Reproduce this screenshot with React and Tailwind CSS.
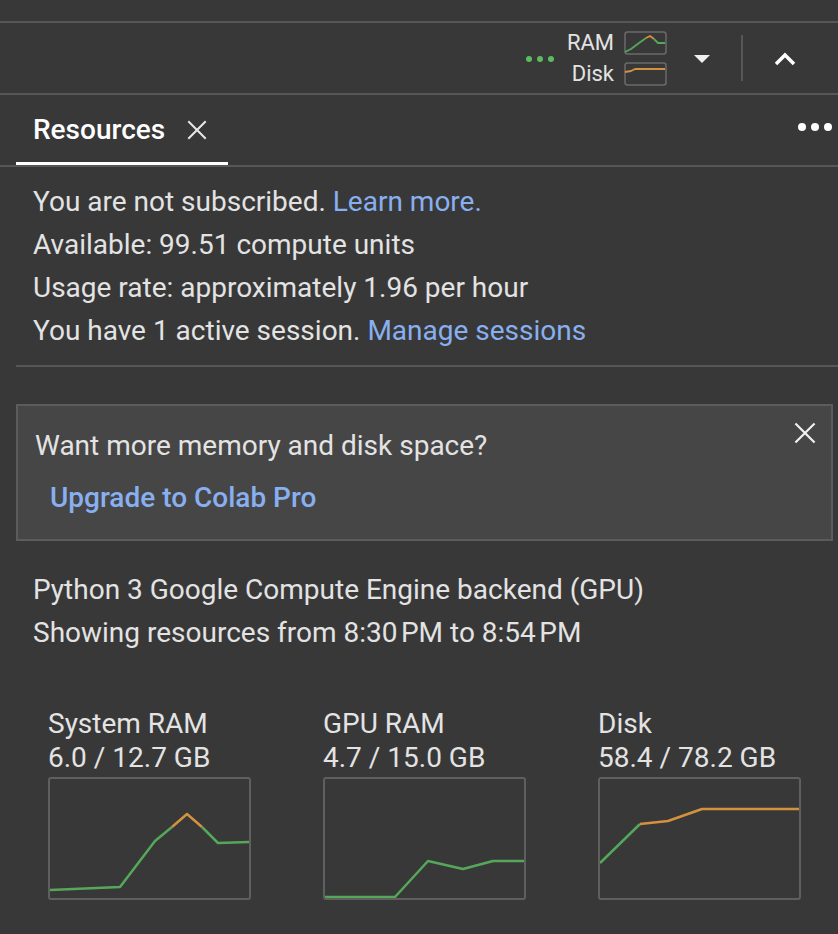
import React from "react";

const GREEN = "#55a85a";
const ORANGE = "#d4923f";

function Chart({ label, value, segments }) {
  return (
    <div className="w-[275px] shrink-0">
      <div className="text-[28px] leading-[34px]">{label}</div>
      <div className="text-[28px] leading-[34px]">{value}</div>
      <div className="mt-[2px] w-[203px] h-[123px] border-2 border-[#5f5f5f] rounded-[3px] overflow-hidden">
        <svg width="199" height="119" viewBox="0 0 199 119">
          {segments.map((s, i) => (
            <polyline
              key={i}
              points={s.points}
              fill="none"
              stroke={s.color}
              strokeWidth="2.5"
              strokeLinejoin="round"
            />
          ))}
        </svg>
      </div>
    </div>
  );
}

function MiniChart({ segments }) {
  return (
    <svg width="43" height="24" viewBox="0 0 43 24">
      <rect x="1" y="1" width="41" height="22" rx="2.5" fill="none" stroke="#6a6a6a" strokeWidth="1.5" />
      {segments.map((s, i) => (
        <polyline key={i} points={s.points} fill="none" stroke={s.color} strokeWidth="1.8" strokeLinejoin="round" />
      ))}
    </svg>
  );
}

function CloseIcon({ size = 20, className = "" }) {
  return (
    <svg width={size} height={size} viewBox="0 0 20 20" className={className}>
      <path d="M2 2 L18 18 M18 2 L2 18" stroke="currentColor" strokeWidth="2" strokeLinecap="square" />
    </svg>
  );
}

export default function App() {
  return (
    <div
      className="w-[838px] h-[934px] overflow-hidden bg-[#383838] text-[#e3e3e3]"
      style={{ fontFamily: "Roboto, 'Noto Sans', sans-serif" }}
    >
      {/* top strip */}
      <div className="h-[23px] border-b-2 border-[#575757]" />

      {/* toolbar */}
      <div className="h-[72px] border-b-2 border-[#575757] flex items-center justify-end pr-[41px]">
        <div className="flex items-center gap-[5px] mr-[13px] mt-[2px]">
          <span className="w-[6px] h-[6px] rounded-full bg-[#5cba5f]" />
          <span className="w-[6px] h-[6px] rounded-full bg-[#5cba5f]" />
          <span className="w-[6px] h-[6px] rounded-full bg-[#5cba5f]" />
        </div>
        <div className="flex flex-col items-end text-[22px] leading-[31px] mr-[10px]">
          <span>RAM</span>
          <span>Disk</span>
        </div>
        <div className="flex flex-col gap-[7px]">
          <MiniChart
            segments={[
              { color: GREEN, points: "1,21 7,18 15,12 22,7" },
              { color: ORANGE, points: "22,7 26,5 30,8" },
              { color: GREEN, points: "30,8 34,12 41,12" },
            ]}
          />
          <MiniChart segments={[{ color: ORANGE, points: "1,10 7,9 11,7 41,7" }]} />
        </div>
        <svg width="16" height="9" viewBox="0 0 16 9" className="ml-[27px] mt-[2px]">
          <path d="M0 0 L16 0 L8 8 Z" fill="#f0f0f0" />
        </svg>
        <div className="ml-[31px] w-[2px] h-[46px] bg-[#575757]" />
        <svg width="24" height="16" viewBox="0 0 24 16" className="ml-[30px] mt-[2px]">
          <path d="M3 13 L12 4 L21 13" fill="none" stroke="#ffffff" strokeWidth="3.5" />
        </svg>
      </div>

      {/* tab row */}
      <div className="h-[72px] border-b-2 border-[#575757] flex items-end justify-between">
        <div className="ml-[16px] w-[212px] h-[70px] border-b-[3px] border-white flex items-center pl-[17px] pt-[3px]">
          <span className="text-[28px] font-medium text-white">Resources</span>
          <CloseIcon size={20} className="ml-[22px] text-[#e8e8e8]" />
        </div>
        <div className="flex gap-[5px] items-center self-center mr-[6px] mt-[-6px]">
          <span className="w-[8px] h-[8px] rounded-full bg-white" />
          <span className="w-[8px] h-[8px] rounded-full bg-white" />
          <span className="w-[8px] h-[8px] rounded-full bg-white" />
        </div>
      </div>

      {/* subscription info */}
      <div className="px-[33px] pt-[13px] text-[28px] leading-[43px]">
        <div>
          You are not subscribed. <span className="text-[#88b0f0]">Learn more.</span>
        </div>
        <div>Available: 99.51 compute units</div>
        <div>Usage rate: approximately 1.96 per hour</div>
        <div>
          You have 1 active session. <span className="text-[#88b0f0]">Manage sessions</span>
        </div>
      </div>
      <div className="ml-[16px] mt-[13px] h-[2px] bg-[#575757]" />

      {/* upgrade banner */}
      <div className="relative ml-[16px] mr-[5px] mt-[37px] border-2 border-[#5c5c5c] bg-[#464646] pl-[17px] pt-[25px] pb-[26px]">
        <div className="text-[28px] leading-[30px]">Want more memory and disk space?</div>
        <div className="mt-[22px] ml-[15px] text-[28px] leading-[30px] font-medium text-[#88b0f0]">
          Upgrade to Colab Pro
        </div>
        <CloseIcon size={22} className="absolute top-[16px] right-[15px] text-[#f0f0f0]" />
      </div>

      {/* backend */}
      <div className="px-[33px] mt-[27px] text-[28px] leading-[43px]">
        <div>Python 3 Google Compute Engine backend (GPU)</div>
        <div>Showing resources from 8:30&#8239;PM to 8:54&#8239;PM</div>
      </div>

      {/* charts */}
      <div className="flex pl-[48px] mt-[53px]">
        <Chart
          label="System RAM"
          value="6.0 / 12.7 GB"
          segments={[
            { color: GREEN, points: "0,111 70,108 105,62 122,48" },
            { color: ORANGE, points: "122,48 137,35 152,48" },
            { color: GREEN, points: "152,48 168,64 200,63" },
          ]}
        />
        <Chart
          label="GPU RAM"
          value="4.7 / 15.0 GB"
          segments={[{ color: GREEN, points: "0,118 70,118 103,82 138,90 168,82 200,82" }]}
        />
        <Chart
          label="Disk"
          value="58.4 / 78.2 GB"
          segments={[
            { color: GREEN, points: "0,84 40,45" },
            { color: ORANGE, points: "40,45 68,42 102,30 200,30" },
          ]}
        />
      </div>
    </div>
  );
}
